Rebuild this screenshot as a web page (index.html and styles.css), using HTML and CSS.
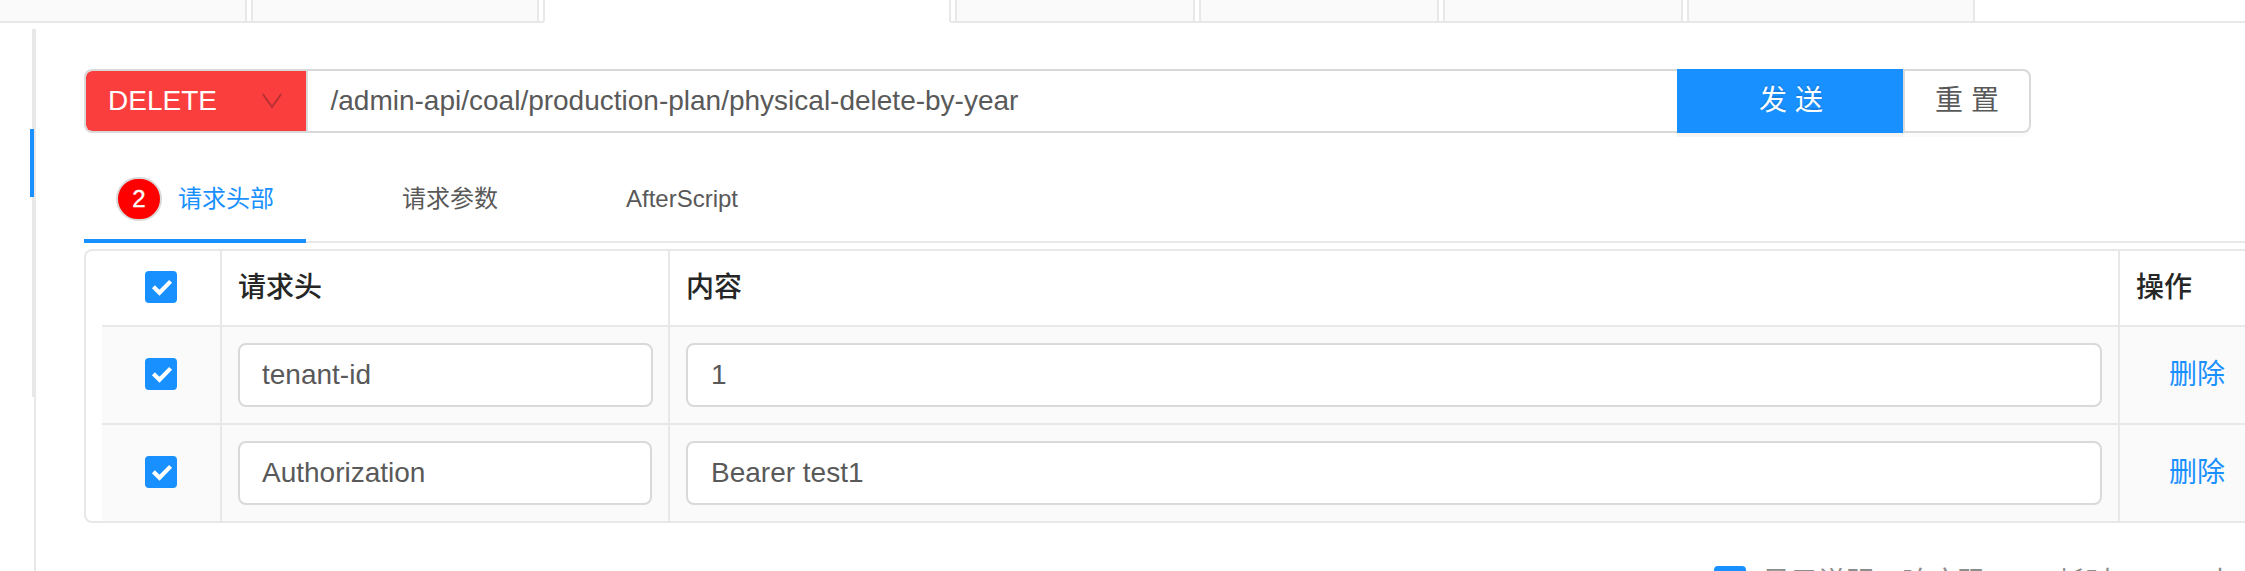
FILE: index.html
```html
<!DOCTYPE html>
<html lang="zh-CN">
<head>
<meta charset="utf-8">
<title>接口调试</title>
<link rel="stylesheet" href="styles.css">
</head>
<body>
<div class="page">
  <div class="tabbar">
    <span class="tab tab-first"></span>
    <span class="tab tab-a"></span>
    <span class="tab tab-active"></span>
    <span class="tab tab-b"></span>
    <span class="tab tab-b"></span>
    <span class="tab tab-b"></span>
    <span class="tab tab-c"></span>
  </div>
  <div class="body">
    <aside class="side"><div class="side-menu"><div class="side-ink"></div></div></aside>
    <main class="main">
      <div class="request">
        <div class="method"><span>DELETE</span>
          <svg class="chevron" viewBox="0 0 20 16"><path d="M0.8 1 L10 14 L19.2 1" fill="none" stroke="#b92f34" stroke-width="2"/></svg>
        </div>
        <div class="url">/admin-api/coal/production-plan/physical-delete-by-year</div>
        <div class="send">发 送</div>
        <div class="reset">重 置</div>
      </div>
      <nav class="nav">
        <div class="nav-item nav-on"><span class="badge">2</span><span>请求头部</span></div>
        <div class="nav-item nav-params">请求参数</div>
        <div class="nav-item nav-script">AfterScript</div>
      </nav>
      <div class="table">
        <div class="row head">
          <div class="cell check"><span class="box"><svg viewBox="0 0 32 32"><path d="M8.4 15.8 L14.5 21.8 L25.6 10.4" fill="none" stroke="#fff" stroke-width="4.2"/></svg></span></div>
          <div class="cell name">请求头</div>
          <div class="cell value">内容</div>
          <div class="cell action">操作</div>
        </div>
        <div class="row">
          <div class="cell check"><span class="box"><svg viewBox="0 0 32 32"><path d="M8.4 15.8 L14.5 21.8 L25.6 10.4" fill="none" stroke="#fff" stroke-width="4.2"/></svg></span></div>
          <div class="cell name"><div class="field">tenant-id</div></div>
          <div class="cell value"><div class="field">1</div></div>
          <div class="cell action"><a class="link">删除</a></div>
        </div>
        <div class="row">
          <div class="cell check"><span class="box"><svg viewBox="0 0 32 32"><path d="M8.4 15.8 L14.5 21.8 L25.6 10.4" fill="none" stroke="#fff" stroke-width="4.2"/></svg></span></div>
          <div class="cell name"><div class="field field-short">Authorization</div></div>
          <div class="cell value"><div class="field">Bearer test1</div></div>
          <div class="cell action"><a class="link">删除</a></div>
        </div>
      </div>
      <div class="status">
        <span class="box"></span>
        <span class="st-show">显示说明</span>
        <span class="st-code">响应码</span>
        <span class="st-time">耗时</span>
        <span class="st-size">大小</span>
      </div>
    </main>
  </div>
</div>
</body>
</html>
```

FILE: styles.css
```css
* { box-sizing: border-box; }
body {
  margin: 0;
  background: #fff;
  color: #595959;
  font: 28px/42px "Liberation Sans", "Noto Sans CJK SC", sans-serif;
}
.page { width: 2245px; height: 571px; overflow: hidden; }
.tabbar { display: flex; height: 23px; background: linear-gradient(#e8e8e8, #e8e8e8) 0 21px / 100% 2px no-repeat; }
.tab {
  flex: none;
  height: 23px;
  margin-right: 4px;
  background: #fafafa;
  border: 2px solid #e8e8e8;
  border-top: 0;
}
.tab-first { width: 247px; border-left: 0; }
.tab-a { width: 288px; }
.tab-active { width: 408px; background: #fff; border-bottom-color: #fff; }
.tab-b { width: 240px; }
.tab-c { width: 288px; margin-right: 0; }
.body { display: flex; height: 548px; }
.side { width: 84px; flex: none; padding: 6px 0 0 30px; background: linear-gradient(#e8e8e8, #e8e8e8) 34px 6px / 2px 100% no-repeat; }
.side-menu { width: 4px; height: 368px; padding-top: 100px; background: linear-gradient(#e8e8e8, #e8e8e8) 2px 0 / 2px 100% no-repeat; }
.side-ink { width: 4px; height: 68px; background: #1890ff; }
.main { flex: none; width: 2161px; padding-top: 46px; }
.request { display: flex; height: 64px; line-height: 60px; }
.method {
  display: flex;
  align-items: center;
  justify-content: space-between;
  width: 222px;
  padding: 0 24px 0 22px;
  color: #fff;
  background: #fa3e3e;
  background-clip: padding-box;
  border: 2px solid #d9d9d9;
  border-right: 0;
  border-radius: 8px 0 0 8px;
}
.chevron { width: 20px; height: 16px; }
.url { width: 1371px; padding-left: 22.5px; border: 2px solid #d9d9d9; border-right: 0; }
.send { width: 226px; padding-left: 2px; line-height: 64px; text-align: center; color: #fff; background: #1890ff; box-shadow: 0 4px 0 rgba(0,0,0,.045); text-shadow: 0 -2px 0 rgba(0,0,0,.12); }
.reset { width: 128px; text-align: center; border: 2px solid #d9d9d9; border-radius: 0 8px 8px 0; box-shadow: 0 4px 0 rgba(0,0,0,.015); }
.nav { display: flex; height: 110px; padding-top: 22px; font-size: 24px; line-height: 88px; border-bottom: 2px solid #e8e8e8; }
.nav-item { flex: none; height: 88px; }
.nav-on { display: flex; align-items: center; width: 222px; padding: 4px 0 0 32px; color: #1890ff; border-bottom: 4px solid #1890ff; }
.badge { width: 46px; height: 44px; margin-right: 16px; border: 2px solid #d9d9d9; border-radius: 23px; background: red; color: #fff; text-align: center; line-height: 40px; -webkit-text-stroke: .4px #fff; }
.nav-params { padding-left: 96px; width: 320px; }
.table { width: 2200px; margin-top: 6px; border: 2px solid #e8e8e8; border-radius: 8px; padding-left: 16px; }
.row { display: flex; height: 98px; background: #fafafa; border-top: 2px solid #e8e8e8; }
.head { height: 74px; background: #fff; border-top: 0; color: #262626; font-weight: 500; }
.cell { flex: none; display: flex; align-items: center; padding: 0 16px; border-right: 2px solid #e8e8e8; }
.check { width: 120px; padding: 0 0 2px 43px; }
.name { width: 448px; }
.value { width: 1450px; }
.action { width: 160px; border-right: 0; }
.box { display: block; flex: none; width: 32px; height: 32px; border-radius: 4px; background: #1890ff; }
.box svg { display: block; width: 32px; height: 32px; }
.field { flex: none; width: 415px; height: 64px; line-height: 60px; padding-left: 22px; background: #fff; border: 2px solid #d9d9d9; border-radius: 8px; }
.field-short { width: 414px; }
.value .field { width: 1416px; padding-left: 23px; }
.link { color: #1890ff; padding-left: 33px; }
.status { display: flex; align-items: flex-start; margin-top: 43px; padding-left: 1630px; line-height: 34px; color: #8c8c8c; white-space: nowrap; }
.status span { flex: none; }
.st-show { margin-left: 16px; width: 140px; }
.st-code { width: 155px; }
.st-time { width: 149px; }
```
